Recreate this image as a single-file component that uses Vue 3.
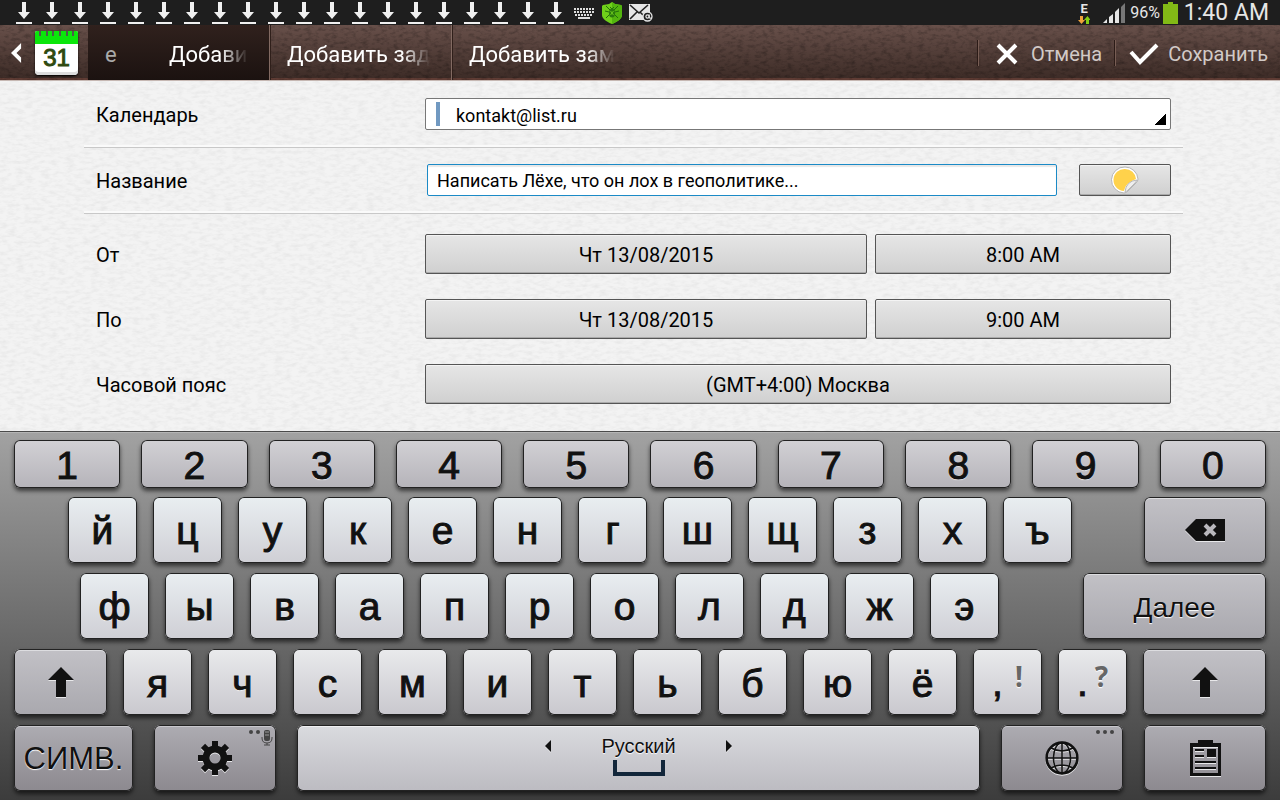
<script setup>
import { ref } from 'vue'

const downloads = 20
const title = ref('Написать Лёхе, что он лох в геополитике...')
const calendar = ref('kontakt@list.ru')

const letters = (text) => [...text].map((label) => ({ label, w: 69, kind: 'letter' }))
const gap = (w) => ({ w, kind: 'gap' })

const rows = [
  { name: 'row-digits', keys: [...'1234567890'].map((label) => ({ label, w: 106, kind: 'digit' })) },
  {
    name: 'row-upper',
    keys: [gap(38), ...letters('йцукенгшщзхъ'), gap(40), { w: 122, kind: 'fn', icon: 'backspace', aria: 'Удалить' }],
  },
  {
    name: 'row-middle',
    keys: [gap(50), ...letters('фывапролджэ'), gap(52), { w: 183, kind: 'fn', text: 'Далее', size: 'next' }],
  },
  {
    name: 'row-lower',
    keys: [
      { w: 93, kind: 'fn', icon: 'shift', aria: 'Shift' },
      ...letters('ячсмитьбюё'),
      { w: 69, kind: 'letter', label: ',', alt: '!' },
      { w: 69, kind: 'letter', label: '.', alt: '?' },
      { w: 123, kind: 'fn', icon: 'shift', aria: 'Shift' },
    ],
  },
  {
    name: 'row-bottom',
    keys: [
      { w: 119, kind: 'fn', text: 'СИМВ.', size: 'sym' },
      { w: 122, kind: 'fn', icon: 'gear', aria: 'Настройки' },
      { w: 683, kind: 'space', icon: 'space' },
      { w: 122, kind: 'fn', icon: 'globe', aria: 'Язык' },
      { w: 122, kind: 'fn', icon: 'clipboard', aria: 'Буфер обмена' },
    ],
  },
]
</script>

<template>
  <div class="screen">
    <div class="status">
      <div class="notices">
        <svg v-for="n in downloads" :key="n" class="dl" viewBox="0 0 16 24" aria-hidden="true">
          <path d="M6 1h4v10h4L8 18 2 11h4z" /><path d="M0 21h16v2H0z" />
        </svg>
        <svg class="kbd" viewBox="0 0 20 12" aria-hidden="true">
          <path d="M0 2h20M0 5h20M1 8h18" stroke="#ddd" stroke-width="2" stroke-dasharray="2 1" />
          <path d="M4 11h12" stroke="#ddd" stroke-width="2" />
        </svg>
        <svg class="shield" viewBox="0 0 20 22" aria-hidden="true">
          <path d="M10 0 13 2l6 1 1 1v9c0 4-5 7-10 9C5 20 0 17 0 13V4l1-1 6-1z" fill="#6fd01a" />
          <path d="M10 0 13 2l6 1 1 1v9c0 4-5 7-10 9z" fill="#52b40e" />
          <g fill="none" stroke="#226c0b">
            <path d="M4 4l4 4M16 4l-4 4M3 9l4 1M17 9l-4 1M4 16l4-4M16 16l-4-4M8 5l2 2 2-2" />
          </g>
          <ellipse cx="10" cy="11" rx="3" ry="4.500" fill="#2b7a0e" />
          <path d="M8.500 9l3 4m0-4-3 4" stroke="#69c81b" />
        </svg>
        <svg class="mail" viewBox="0 0 24 18" aria-hidden="true">
          <path d="M0 0h21v10h-6v6H0z" fill="#e6e6e6" />
          <path d="M1 1l9 8 9-8M1 15l7-7M11 8l3 3" fill="none" stroke="#222" stroke-width="1.600" />
          <circle cx="18.500" cy="12.500" r="4.500" fill="#1e1e1e" stroke="#e6e6e6" stroke-width="1.300" />
          <circle cx="18.500" cy="12.500" r="1.600" fill="none" stroke="#e6e6e6" stroke-width="1.200" />
          <path d="M20.200 10.500v3q1 1.500 2.500 0" fill="none" stroke="#e6e6e6" stroke-width="1.200" />
        </svg>
      </div>
      <div class="system">
        <div class="net">
          <span>E</span>
          <svg viewBox="0 0 12 8" aria-hidden="true">
            <path d="M2 0h3v4h2L3.500 8 0 4h2z" fill="#f0a23a" />
            <path d="M8 8h3V4h1.500L9.500 0 6 4h2z" fill="#84cf14" />
          </svg>
        </div>
        <svg class="signal" viewBox="0 0 24 20" aria-hidden="true">
          <path d="M0 20l4-4v4zM6 14l4-3v9H6zM12 9l4-4v15h-4z" fill="#e6e6e6" />
          <path d="M18 4l4-4v20h-4z" fill="#777" />
        </svg>
        <span class="percent">96%</span>
        <svg class="battery" viewBox="0 0 15 22" aria-hidden="true"><path d="M0 2h5V0h5v2h5v20H0z" fill="#82ba16" /></svg>
        <time class="clock">1:40 AM</time>
      </div>
    </div>

    <header class="bar">
      <svg class="grain" aria-hidden="true">
        <filter id="leather">
          <feTurbulence type="fractalNoise" baseFrequency="0.16 0.3" numOctaves="3" seed="4" />
          <feColorMatrix values="0 0 0 0 0  0 0 0 0 0  0 0 0 0 0  1.400 0 0 0 -0.620" />
        </filter>
        <rect width="100%" height="100%" filter="url(#leather)" />
      </svg>
      <button class="back-btn" type="button" aria-label="Назад">
        <svg class="back" viewBox="0 0 12 22" aria-hidden="true"><path d="M11 0v6L6 11l5 5v6L0 11z" fill="#fff" /></svg>
        <span class="cal"><span class="cal-top"><svg viewBox="0 0 43 6" aria-hidden="true"><path d="M5 0v5M12 0v5M18 0v5M25 0v5M32 0v5M38 0v5" stroke="#4e5a4a" stroke-width="2" /></svg></span><span class="cal-day">31</span></span>
      </button>
      <nav class="tabs">
        <button class="tab active" type="button"><span class="tail">е</span><span class="fade">Добави</span></button>
        <button class="tab" type="button"><span class="fade">Добавить зад</span></button>
        <button class="tab" type="button"><span class="fade">Добавить зам</span></button>
      </nav>
      <div class="actions">
        <button class="action" type="button">
          <svg class="cross" viewBox="0 0 22 22" aria-hidden="true"><path d="M2 2l18 18M20 2L2 20" stroke="#fff" stroke-width="4" /></svg>
          Отмена
        </button>
        <button class="action save" type="button">
          <svg class="check" viewBox="0 0 30 22" aria-hidden="true"><path d="M2 9l9 10L28 2" fill="none" stroke="#fff" stroke-width="4" /></svg>
          Сохранить
        </button>
      </div>
    </header>

    <main class="form">
      <svg class="grain" aria-hidden="true">
        <filter id="paper">
          <feTurbulence type="fractalNoise" baseFrequency="0.12 0.3" numOctaves="3" seed="9" />
          <feColorMatrix values="0 0 0 0 0  0 0 0 0 0  0 0 0 0 0  0.100 0 0 0 -0.040" />
        </filter>
        <rect width="100%" height="100%" filter="url(#paper)" />
      </svg>
      <div class="field ruled">
        <label for="calendar">Календарь</label>
        <div class="picker">
          <select id="calendar" v-model="calendar"><option>kontakt@list.ru</option></select>
          <span class="stripe"></span><span class="corner"></span>
        </div>
      </div>
      <div class="field ruled">
        <label for="title">Название</label>
        <div class="title-row">
          <input id="title" v-model="title" type="text" />
          <button class="box sticker" type="button" aria-label="Стикер">
            <svg viewBox="0 0 28 28" aria-hidden="true">
              <path d="M14 1a13 13 0 1 0-1 26q2 0 4-2l8-8q2-2 2-4A13 13 0 0 0 14 1z" fill="#fff" stroke="#b5b5b5" />
              <path d="M14 3A11 11 0 1 0 13 25q1-8 12-12A11 11 0 0 0 14 3z" fill="#ffd24b" />
              <path d="M14 26q1-11 12-12-1 2-3 4l-6 6q-2 2-3 2z" fill="#efefef" stroke="#b9b9b9" />
            </svg>
          </button>
        </div>
      </div>
      <div class="times">
        <div class="field" role="group" aria-labelledby="from">
          <span id="from" class="caption">От</span>
          <div class="pair"><button class="box" type="button">Чт 13/08/2015</button><button class="box" type="button">8:00 AM</button></div>
        </div>
        <div class="field" role="group" aria-labelledby="to">
          <span id="to" class="caption">По</span>
          <div class="pair"><button class="box" type="button">Чт 13/08/2015</button><button class="box" type="button">9:00 AM</button></div>
        </div>
        <div class="field" role="group" aria-labelledby="zone">
          <span id="zone" class="caption">Часовой пояс</span>
          <button class="box" type="button">(GMT+4:00) Москва</button>
        </div>
      </div>
    </main>

    <section class="keyboard" aria-label="Клавиатура">
      <div v-for="row in rows" :key="row.name" class="row" :class="row.name">
        <template v-for="(k, i) in row.keys" :key="i">
          <span v-if="k.kind === 'gap'" class="gap" :style="{ flexGrow: k.w }"></span>
          <button v-else type="button" class="key" :class="[k.kind, k.size]" :style="{ flexGrow: k.w }" :aria-label="k.aria">
            <template v-if="k.alt"><span class="punct">{{ k.label }}</span><span class="alt">{{ k.alt }}</span></template>
            <template v-else-if="k.label">{{ k.label }}</template>
            <template v-else-if="k.text">{{ k.text }}</template>
            <svg v-else-if="k.icon === 'backspace'" class="i-back" viewBox="0 0 40 22" aria-hidden="true">
              <path d="M0 11 11 0h29v22H11z" fill="#111" /><path d="M20 6l10 10M30 6L20 16" stroke="#b9b8bd" stroke-width="4" />
            </svg>
            <svg v-else-if="k.icon === 'shift'" class="i-shift" viewBox="0 0 26 30" aria-hidden="true">
              <path d="M13 0l13 13h-8v17H8V13H0z" fill="#111" />
            </svg>
            <template v-else-if="k.icon === 'gear'">
              <svg class="i-gear" viewBox="-17 -17 34 34" aria-hidden="true">
                <circle r="9" fill="none" stroke="#111" stroke-width="7" />
                <path v-for="a in 8" :key="a" d="M-3-17h6v6h-6z" fill="#111" :transform="`rotate(${a * 45})`" />
              </svg>
              <svg class="hint" viewBox="0 0 26 18" aria-hidden="true">
                <circle cx="4" cy="3" r="2" /><circle cx="11" cy="3" r="2" />
                <rect x="17" y="1" width="6" height="11" rx="2" />
                <path d="M15 8v1q0 5 5 5t5-5V8M20 14v2M17 16h6" fill="none" stroke="#444" />
                <path d="M18 3h4M18 6h4" stroke="#999" />
              </svg>
            </template>
            <span v-else-if="k.icon === 'space'" class="spacebar">
              <span class="lang">
                <svg viewBox="0 0 6 12" aria-hidden="true"><path d="M6 0v12L0 6z" /></svg>
                <span>Русский</span>
                <svg viewBox="0 0 6 12" aria-hidden="true"><path d="M0 0v12l6-6z" /></svg>
              </span>
              <span class="bracket"></span>
            </span>
            <template v-else-if="k.icon === 'globe'">
              <svg class="i-globe" viewBox="0 0 34 34" aria-hidden="true">
                <g fill="none" stroke="#111" stroke-width="1.600">
                  <circle cx="17" cy="17" r="15.400" stroke-width="2.600" />
                  <ellipse cx="17" cy="17" rx="8.500" ry="15.400" />
                  <path d="M17 2v30M2 17h30M6 7q11 6 22 0M6 27q11-6 22 0" />
                </g>
              </svg>
              <svg class="hint dots" viewBox="0 0 20 6" aria-hidden="true"><circle cx="3" cy="3" r="2" /><circle cx="10" cy="3" r="2" /><circle cx="17" cy="3" r="2" /></svg>
            </template>
            <svg v-else class="i-clip" viewBox="0 0 31 36" aria-hidden="true">
              <path d="M8 0h15v3h8v33H0V3h8zM3 7v26h25V7z" fill="#111" fill-rule="evenodd" />
              <path d="M5 10h9M5 16h9M5 22h21M5 28h21" stroke="#111" stroke-width="2" /><path d="M17 9h9v8h-9z" fill="#111" />
            </svg>
          </button>
        </template>
      </div>
    </section>
  </div>
</template>

<style>
body { margin: 0; }
</style>

<style scoped>
.screen { min-height: 100vh; display: flex; flex-direction: column; overflow: hidden; font-family: Roboto, "Liberation Sans", sans-serif; font-size: 20px; color: #000; }
.screen * { box-sizing: border-box; }
button { margin: 0; padding: 0; border: 0; font: inherit; color: inherit; background: none; cursor: pointer; }
svg { display: block; flex: none; }

.status { display: flex; justify-content: space-between; align-items: center; height: 25px; padding: 0 11px 0 16px; background: #1e1e1e; color: #e6e6e6; }
.notices, .system { display: flex; align-items: center; }
.dl { width: 16px; height: 24px; margin-right: 12px; fill: #f0f0f0; }
.kbd { width: 20px; height: 12px; margin: 0 8px 0 -2px; }
.shield { width: 20px; height: 22px; margin-right: 7px; }
.mail { width: 24px; height: 18px; }
.net { display: flex; flex-direction: column; align-items: center; width: 14px; margin-right: 12px; font: bold 13px/14px Roboto, sans-serif; }
.net svg { width: 12px; height: 8px; }
.signal { width: 24px; height: 20px; margin-right: 3px; }
.percent { font-size: 16px; margin-right: 3px; }
.battery { width: 15px; height: 22px; margin-right: 6px; }
.clock { font-size: 23px; line-height: 24px; }

.bar { position: relative; display: flex; height: 56px; background: linear-gradient(#68504a, #3c2b26); border-bottom: 1px solid #c6b8b3; box-shadow: inset 0 -2px #5f3c34; color: #fff; text-shadow: 0 -1px 1px #1a100d; }
.bar > * { position: relative; }
.grain, .bar > .grain { position: absolute; inset: 0; width: 100%; height: 100%; pointer-events: none; }
.bar > .grain { opacity: 0.4; }
.back-btn { display: flex; align-items: center; width: 88px; padding-left: 11px; }
.back { width: 11px; height: 22px; margin-right: 13px; }
.cal { width: 43px; height: 44px; border-radius: 2px 2px 4px 4px; background: #fff; box-shadow: 0 1px 2px #000, inset 0 -3px #ddd; overflow: hidden; text-shadow: none; }
.cal-top { display: block; height: 13px; background: #0be60b; }
.cal-top svg { width: 43px; height: 6px; }
.cal-day { display: block; color: #2f4a10; font: 24px/28px "Liberation Sans", sans-serif; -webkit-text-stroke: 1px #2f4a10; }
.tabs { display: flex; flex: 1; }
.tab { display: flex; align-items: center; width: 182px; padding: 3px 18px 0 17px; border-left: 1px solid #826a62; box-shadow: inset 1px 0 #2f1f1a; font-size: 22px; }
.tab.active { width: 181px; padding-left: 17px; border: 0; background: linear-gradient(#30211d, #1b1210); box-shadow: none; }
.tail { width: 64px; text-align: left; color: #aaa; }
.fade { overflow: hidden; white-space: nowrap; -webkit-mask-image: linear-gradient(to left, transparent, #000 28px); mask-image: linear-gradient(to left, transparent, #000 28px); }
.actions { display: flex; align-items: center; }
.action { display: flex; align-items: center; height: 26px; padding: 2px 13px 0 17px; border-left: 1px solid #775d54; box-shadow: -1px 0 #2b1b17; color: #d2cac7; }
.save { padding: 2px 12px 0 13px; }
.cross { width: 22px; height: 22px; margin-right: 13px; }
.check { width: 30px; height: 22px; margin-right: 9px; }

.form { position: relative; flex: 1; padding: 0 97px 0 84px; background: #f3f3f3; }
.field { position: relative; display: grid; grid-template-columns: 329px 1fr; align-items: center; padding: 0 12px; }
.field label, .caption { padding-top: 2px; }
.ruled { height: 66px; border-bottom: 1px solid #fafafa; box-shadow: inset 0 -1px #fafafa, 0 1px #c8c8c8; }
.times { display: grid; gap: 25px; padding-top: 21px; }
.picker { position: relative; }
.picker select { display: block; width: 100%; height: 32px; padding: 3px 30px 0; border: 1px solid #777; border-radius: 2px; appearance: none; background: #fff; font: 18px Roboto, sans-serif; color: #000; }
.stripe { position: absolute; left: 11px; top: 4px; width: 4px; height: 24px; background: #7199c1; }
.corner { position: absolute; right: 5px; bottom: 5px; width: 11px; height: 11px; background: linear-gradient(135deg, transparent 50%, #000 50%); pointer-events: none; }
.title-row { display: flex; gap: 22px; padding-left: 2px; }
.title-row input { flex: 1; min-width: 0; height: 32px; padding: 2px 9px 0; border: 1px solid #1b8ac6; border-radius: 2px; outline: 0; background: #fff; box-shadow: inset 0 2px 1px #e8e8e8; font: 18px Roboto, sans-serif; color: #000; }
.box { height: 40px; padding-top: 2px; border: 1px solid #555; border-radius: 2px; background: linear-gradient(#e6e6e6, #d0d0d0); box-shadow: inset 0 1px #f4f4f4, inset 0 -1px #aaa; }
.sticker { display: grid; place-items: center; width: 92px; height: 32px; padding: 0; }
.sticker svg { width: 28px; height: 28px; }
.pair { display: grid; grid-template-columns: 442fr 296fr; gap: 8px; }

.keyboard { position: relative; display: flex; flex-direction: column; gap: 10px; padding: 8px 14px 9px; border-top: 1px solid #4a4a4a; box-shadow: inset 0 1px #b5b5b5; background: linear-gradient(#a2a2a2, #3c3c3c); font-family: "Liberation Sans", Arial, sans-serif; }
.row { display: flex; gap: 16px; height: 66px; }
.row-digits { gap: 21px; height: 48px; margin-bottom: -1px; }
.row-bottom { gap: 21px; }
.gap, .key { flex: 0 1 0; min-width: 0; }
.key { position: relative; display: flex; align-items: center; justify-content: center; border-radius: 6px; color: #111; box-shadow: inset 0 0 0 1px #222, 0 3px 4px rgba(0, 0, 0, 0.6); text-shadow: 0 1px 1px #fff; }
.letter { padding-top: 2px; font-size: 39px; -webkit-text-stroke: 1px #111; background: linear-gradient(#e9eef1, #cfcfd5); }
.row-lower .letter { padding-top: 4px; background: linear-gradient(#e9eaec, #c9c8ce); }
.digit { padding-top: 4px; font-size: 39px; -webkit-text-stroke: 1px #111; background: linear-gradient(#d2d1d5, #b5b3b9); }
.fn { background: linear-gradient(#c2c1c6, #a9a8ae); box-shadow: inset 0 0 0 1px #222, inset 0 2px #dddde0, 0 3px 4px rgba(0, 0, 0, 0.6); }
.row-bottom .fn { background: linear-gradient(#adacb2, #8c898f); box-shadow: inset 0 0 0 1px #222, inset 0 2px #c9c8cd, 0 3px 4px rgba(0, 0, 0, 0.6); }
.next { padding-top: 3px; font-size: 28px; }
.sym { padding-top: 2px; font-size: 31px; }
.space { background: linear-gradient(#dadbdf, #bcbbc1); box-shadow: inset 0 0 0 1px #222, inset 0 2px #f0f0f2, 0 3px 4px rgba(0, 0, 0, 0.6); }
.key svg { filter: drop-shadow(0 1px 0 #e8e8ea); }
.i-back { width: 40px; height: 22px; }
.i-shift { width: 26px; height: 30px; }
.i-gear, .i-globe { width: 34px; height: 34px; }
.i-clip { width: 31px; height: 36px; }
.key .hint { position: absolute; top: 4px; right: 3px; width: 26px; height: 18px; fill: #444; filter: none; }
.key .hint.dots { right: 8px; width: 20px; height: 6px; }
.punct { position: absolute; left: 19px; top: 12px; }
.alt { position: absolute; right: 19px; top: 11px; color: #666; font: bold 28px/32px "Noto Sans", sans-serif; -webkit-text-stroke: 0; }
.spacebar { display: flex; flex-direction: column; align-items: center; padding-bottom: 6px; }
.lang { display: flex; align-items: center; gap: 50px; font-size: 20px; line-height: 24px; }
.lang svg { width: 6px; height: 12px; fill: #111; }
.bracket { width: 52px; height: 16px; margin-top: 2px; border: 4px solid #12263a; border-top: 0; }
</style>
